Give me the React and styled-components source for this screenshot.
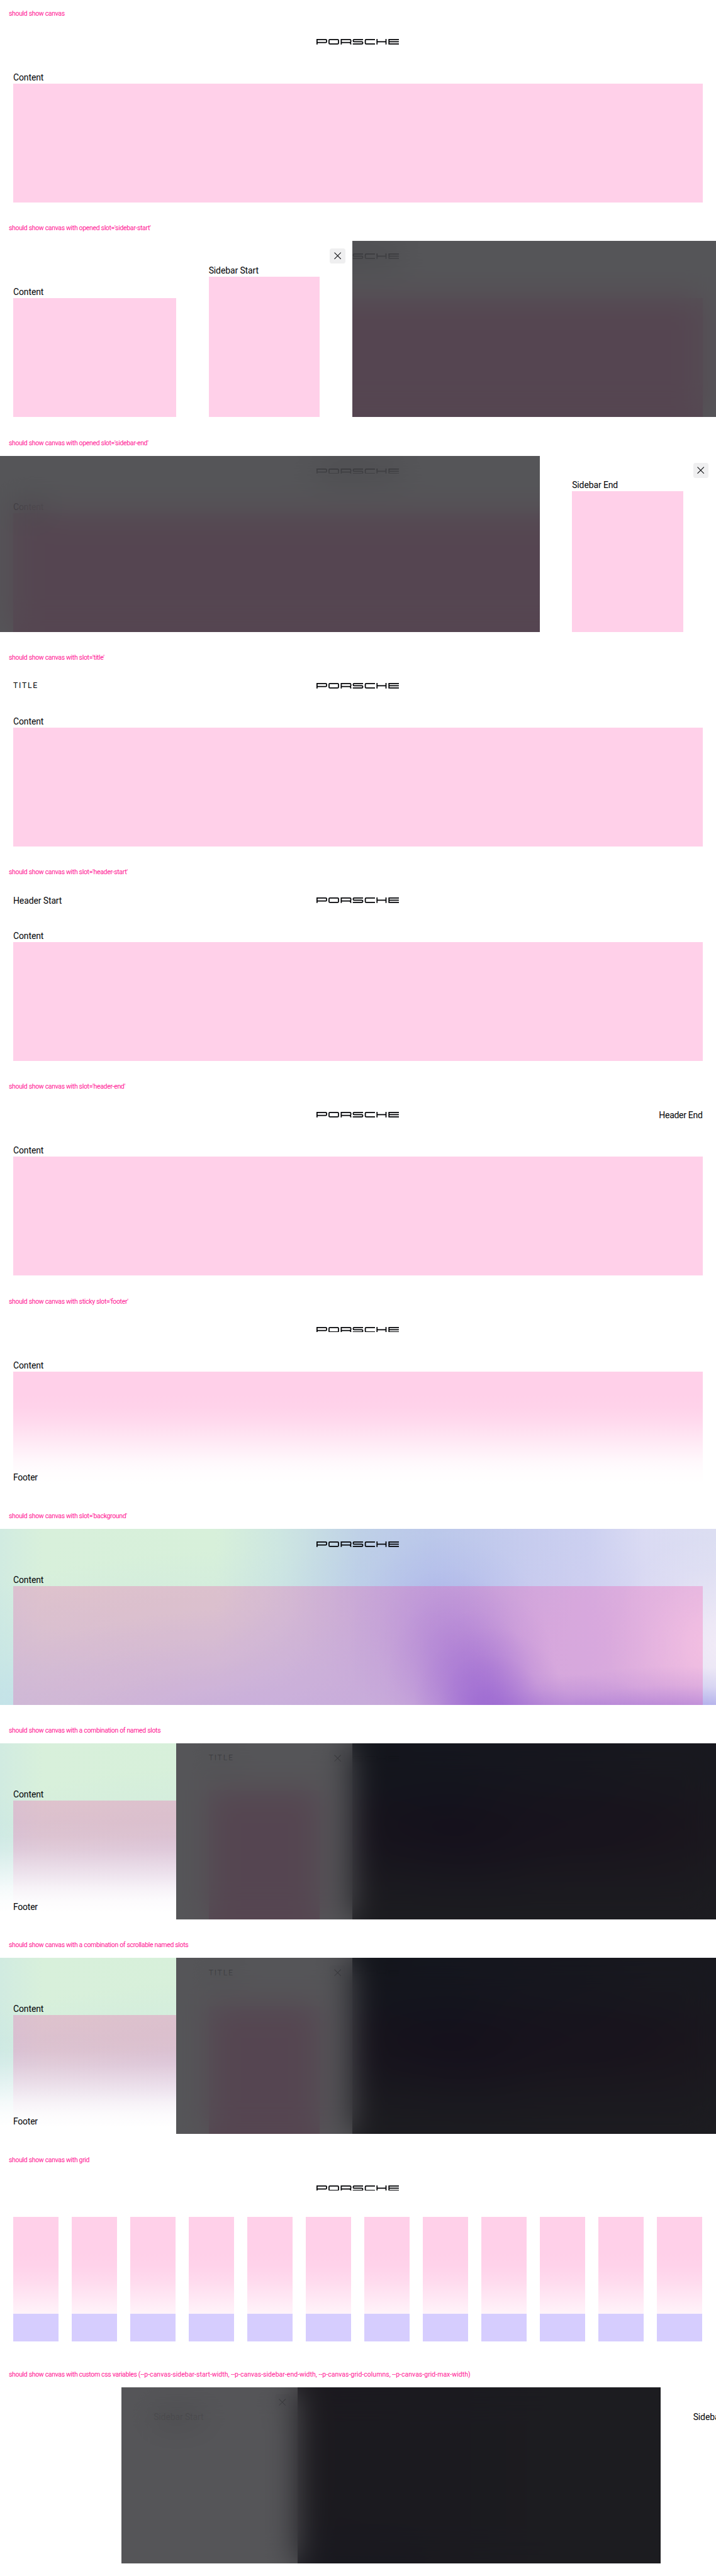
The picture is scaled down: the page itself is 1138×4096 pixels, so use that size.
import React from "react";
import styled, { createGlobalStyle, css } from "styled-components";

const SCALE = 0.875;
const u = (n) => `${n * SCALE}px`;

const GlobalStyle = createGlobalStyle`
  *, *::before, *::after { box-sizing: border-box; }
  body {
    margin: 0;
    background: #fff;
    color: #010205;
    font-family: Roboto, "Liberation Sans", sans-serif;
    overflow: hidden;
  }
`;

const Page = styled.main`
  width: ${u(1300)};
  overflow: hidden;
`;

const Case = styled.section`
  height: ${u(390)};
`;

const CaseLabel = styled.h2`
  margin: 0;
  height: ${u(48)};
  padding-left: ${u(16)};
  font-size: ${u(12)};
  line-height: ${u(50)};
  font-weight: 400;
  letter-spacing: -0.34px;
  color: #ff1493;
  white-space: nowrap;
`;

const Wide = styled.span`
  letter-spacing: 0.02px;
`;

/* Elliptical glow with a soft, bell-shaped falloff. */
const glow = (size, at, rgb, a) =>
  `radial-gradient(ellipse ${size} at ${at}, rgba(${rgb}, ${a}) 0%, rgba(${rgb}, ${a * 0.85}) 20%, rgba(${rgb}, ${a * 0.5}) 44%, rgba(${rgb}, ${a * 0.17}) 70%, rgba(${rgb}, 0) 100%)`;

const pastel = css`
  background:
    ${glow("11% 50%", "68.5% 106%", "116, 108, 224", 0.65)},
    ${glow("12% 56%", "66% 86%", "122, 112, 224", 0.42)},
    ${glow("14% 60%", "62.5% 64%", "140, 136, 228", 0.36)},
    ${glow("20% 70%", "60.5% 34%", "176, 188, 236", 0.45)},
    ${glow("28% 36%", "94% 114%", "124, 120, 226", 0.85)},
    ${glow("18% 32%", "77% 114%", "124, 120, 226", 0.6)},
    ${glow("15% 62%", "100% 66%", "246, 238, 248", 0.8)},
    ${glow("28% 84%", "80% 66%", "208, 204, 240", 0.7)},
    ${glow("62% 110%", "34% 122%", "184, 210, 242", 0.95)},
    ${glow("24% 80%", "0% 105%", "200, 234, 228", 0.85)},
    linear-gradient(90deg, #d1ebe1 0%, #d8f0db 6%, #d7f0da 30%, #cde6e1 39%, #c0d3e6 50%, #becbe9 60%, #c7cdee 74%, #cbd0f0 82%, #dbdcf3 90%, #dcdef2 100%);
`;

/* Every layer of a canvas shares one grid cell, so later layers cover earlier ones. */
const Canvas = styled.div`
  display: grid;
  grid-template: ${u(320)} / ${u(1300)};
  overflow: hidden;
  isolation: isolate;
  ${(p) => p.$background && pastel}
  & > * { grid-area: 1 / 1; min-width: 0; z-index: 0; }
`;

const Main = styled.div`
  display: flex;
  flex-direction: column;
  padding: 0 ${u(24)};
`;

const Header = styled.header`
  display: grid;
  grid-template-columns: 1fr auto 1fr;
  align-items: center;
  height: ${u(56)};
  margin-bottom: ${u(24)};
`;

const Text = styled.p`
  margin: 0;
  height: ${u(24)};
  font-size: ${u(16)};
  line-height: ${u(26)};
  letter-spacing: ${(p) => p.$spacing || "-0.12px"};
  text-align: ${(p) => p.$align || "left"};
  white-space: nowrap;
`;

const Title = styled.h3`
  margin: 0;
  font-size: ${u(14)};
  line-height: ${u(26)};
  font-weight: 400;
  letter-spacing: 1.75px;
`;

const Tile = styled.div`
  flex: 1;
  background: rgba(255, 20, 147, 0.2);
`;

const fade = css`
  background: linear-gradient(
    rgba(255, 255, 255, 0) 0%,
    rgba(255, 255, 255, 0.05) 15%,
    rgba(255, 255, 255, 0.2) 29%,
    rgba(255, 255, 255, 0.58) 53%,
    rgba(255, 255, 255, 0.82) 68%,
    rgba(255, 255, 255, 0.94) 80%,
    #fff 93%
  );
`;

const Footer = styled.footer`
  display: flex;
  align-items: flex-end;
  align-self: end;
  height: ${u(178)};
  padding: 0 ${u(24)} ${u(12)};
  ${fade}
`;

const GridFooter = styled(Footer)`
  padding-bottom: ${u(13)};
`;

const Columns = styled.div`
  flex: 1;
  display: grid;
  grid-template-columns: repeat(12, 1fr);
  gap: ${u(24)};
`;

const Column = styled.div`
  height: ${(p) => (p.$footer ? u(50) : "auto")};
  background: ${(p) => (p.$footer ? "#d6cdfe" : "rgba(255, 20, 147, 0.2)")};
`;

const Backdrop = styled.div`
  margin-left: ${(p) => u(p.$from || 0)};
  margin-right: ${(p) => u(p.$end || 0)};
  background: rgba(1, 2, 5, 0.727);
  backdrop-filter: blur(${u(28)});
  opacity: 0.925;
`;

const SidebarBox = styled.aside`
  display: flex;
  flex-direction: column;
  width: ${u(320)};
  margin-left: ${(p) => u(p.$from)};
  padding: ${u(13)} ${u(59)} 0;
  background: #fff;
`;

const SidebarHead = styled.div`
  display: flex;
  flex: none;
  justify-content: space-between;
  align-items: center;
  height: ${u(28)};
  margin-right: ${u(-46)};
`;

const CloseButton = styled.button`
  display: grid;
  place-items: center;
  width: ${u(28)};
  height: ${u(28)};
  margin-left: auto;
  padding: 0;
  border: 0;
  border-radius: ${u(4)};
  background: #efeff0;
  color: #010205;
`;

const Spacer = styled.div`
  height: ${(p) => u(p.$size)};
`;

const CustomMain = styled.div`
  margin: 0 ${u(100)} 0 ${u(540)};
  background:
    linear-gradient(rgba(222, 220, 255, 0) 66%, #e4e4fc 100%) left / 35% 100% no-repeat,
    linear-gradient(90deg, #fbe6f2, #f6effa 45%, #fff 70%);
`;

const Wordmark = () => (
  <svg width={150 * SCALE} height={10 * SCALE} viewBox="0 0 150 10" fill="none" stroke="#010205" strokeWidth="2" role="img" aria-label="Porsche">
    <path d="M1 10V1H16.8Q18.4 1 18.4 2.6V4.9Q18.4 6.5 16.8 6.5H1" />
    <path d="M24.4 1H38.4Q40 1 40 2.6V7.4Q40 9 38.4 9H24.4Q22.8 9 22.8 7.4V2.6Q22.8 1 24.4 1Z" />
    <path d="M45 10V1H60.8Q62.4 1 62.4 2.6V4.9Q62.4 6.5 60.8 6.5H45M59.6 6.5Q62.2 6.6 62.3 8.4V10" />
    <path d="M84.6 1H68.4Q66.8 1 66.8 2.6V3.4Q66.8 5 68.4 5H82.4Q84 5 84 6.6V7.4Q84 9 82.4 9H66" />
    <path d="M106.3 1H90.3Q88.7 1 88.7 2.6V7.4Q88.7 9 90.3 9H106.3" />
    <path d="M110 0V10M126.3 0V10M110 5H126.3" />
    <path d="M150 1H131.7V9H150M131.7 5H149.6" />
  </svg>
);

const Cross = () => (
  <svg width={13 * SCALE} height={13 * SCALE} viewBox="0 0 13 13" fill="none" stroke="currentColor" strokeWidth="1.15" aria-hidden="true">
    <path d="M0.6 0.6L12.4 12.4M12.4 0.6L0.6 12.4" />
  </svg>
);

const Sidebar = ({ from, title, text, gap, closable = true, tile = true }) => (
  <SidebarBox $from={from}>
    <SidebarHead>
      {title && <Title>{title}</Title>}
      {closable && <CloseButton aria-label="Close"><Cross /></CloseButton>}
    </SidebarHead>
    {text ? <Text>{text}</Text> : <Spacer $size={gap} />}
    {tile && <Tile />}
  </SidebarBox>
);

const MainArea = ({ start, end, grid }) => (
  <Main>
    <Header>
      <div>{start}</div>
      <Wordmark />
      <div>{end}</div>
    </Header>
    {grid ? (
      <Columns>{Array.from({ length: 12 }, (_, i) => <Column key={i} />)}</Columns>
    ) : (
      <>
        <Text>Content</Text>
        <Tile />
      </>
    )}
  </Main>
);

const FooterText = () => (
  <Footer><Text $spacing="-0.25px">Footer</Text></Footer>
);

const Example = ({ label, background, children }) => (
  <Case>
    <CaseLabel>{label}</CaseLabel>
    <Canvas $background={background}>{children}</Canvas>
  </Case>
);

const Combined = ({ label }) => (
  <Example label={label} background>
    <MainArea />
    <FooterText />
    <Backdrop $from={320} />
    <Sidebar from={320} title="TITLE" gap={45} />
    <Backdrop $from={320} />
  </Example>
);

export default function App() {
  return (
    <Page>
      <GlobalStyle />
      <Example label="should show canvas">
        <MainArea />
      </Example>
      <Example label="should show canvas with opened slot='sidebar-start'">
        <MainArea />
        <Backdrop $from={320} />
        <Sidebar from={320} text="Sidebar Start" />
      </Example>
      <Example label="should show canvas with opened slot='sidebar-end'">
        <MainArea />
        <Backdrop />
        <Sidebar from={980} text="Sidebar End" />
      </Example>
      <Example label="should show canvas with slot='title'">
        <MainArea start={<Title>TITLE</Title>} />
      </Example>
      <Example label="should show canvas with slot='header-start'">
        <MainArea start={<Text>Header Start</Text>} />
      </Example>
      <Example label="should show canvas with slot='header-end'">
        <MainArea end={<Text $align="right" $spacing="-0.3px">Header End</Text>} />
      </Example>
      <Example label="should show canvas with sticky slot='footer'">
        <MainArea />
        <FooterText />
      </Example>
      <Example label="should show canvas with slot='background'" background>
        <MainArea />
      </Example>
      <Combined label="should show canvas with a combination of named slots" />
      <Combined label="should show canvas with a combination of scrollable named slots" />
      <Example label="should show canvas with grid">
        <MainArea grid />
        <GridFooter>
          <Columns>{Array.from({ length: 12 }, (_, i) => <Column key={i} $footer />)}</Columns>
        </GridFooter>
      </Example>
      <Example
        label={
          <>
            should show canvas with custom css variables{" "}
            <Wide>(--p-canvas-sidebar-start-width, --p-canvas-sidebar-end-width, --p-canvas-grid-columns, --p-canvas-grid-max-width)</Wide>
          </>
        }
      >
        <CustomMain />
        <Backdrop $from={220} $end={100} />
        <Sidebar from={220} text="Sidebar Start" tile={false} />
        <Backdrop $from={220} $end={100} />
        <Sidebar from={1200} text="Sidebar End" closable={false} tile={false} />
      </Example>
    </Page>
  );
}
